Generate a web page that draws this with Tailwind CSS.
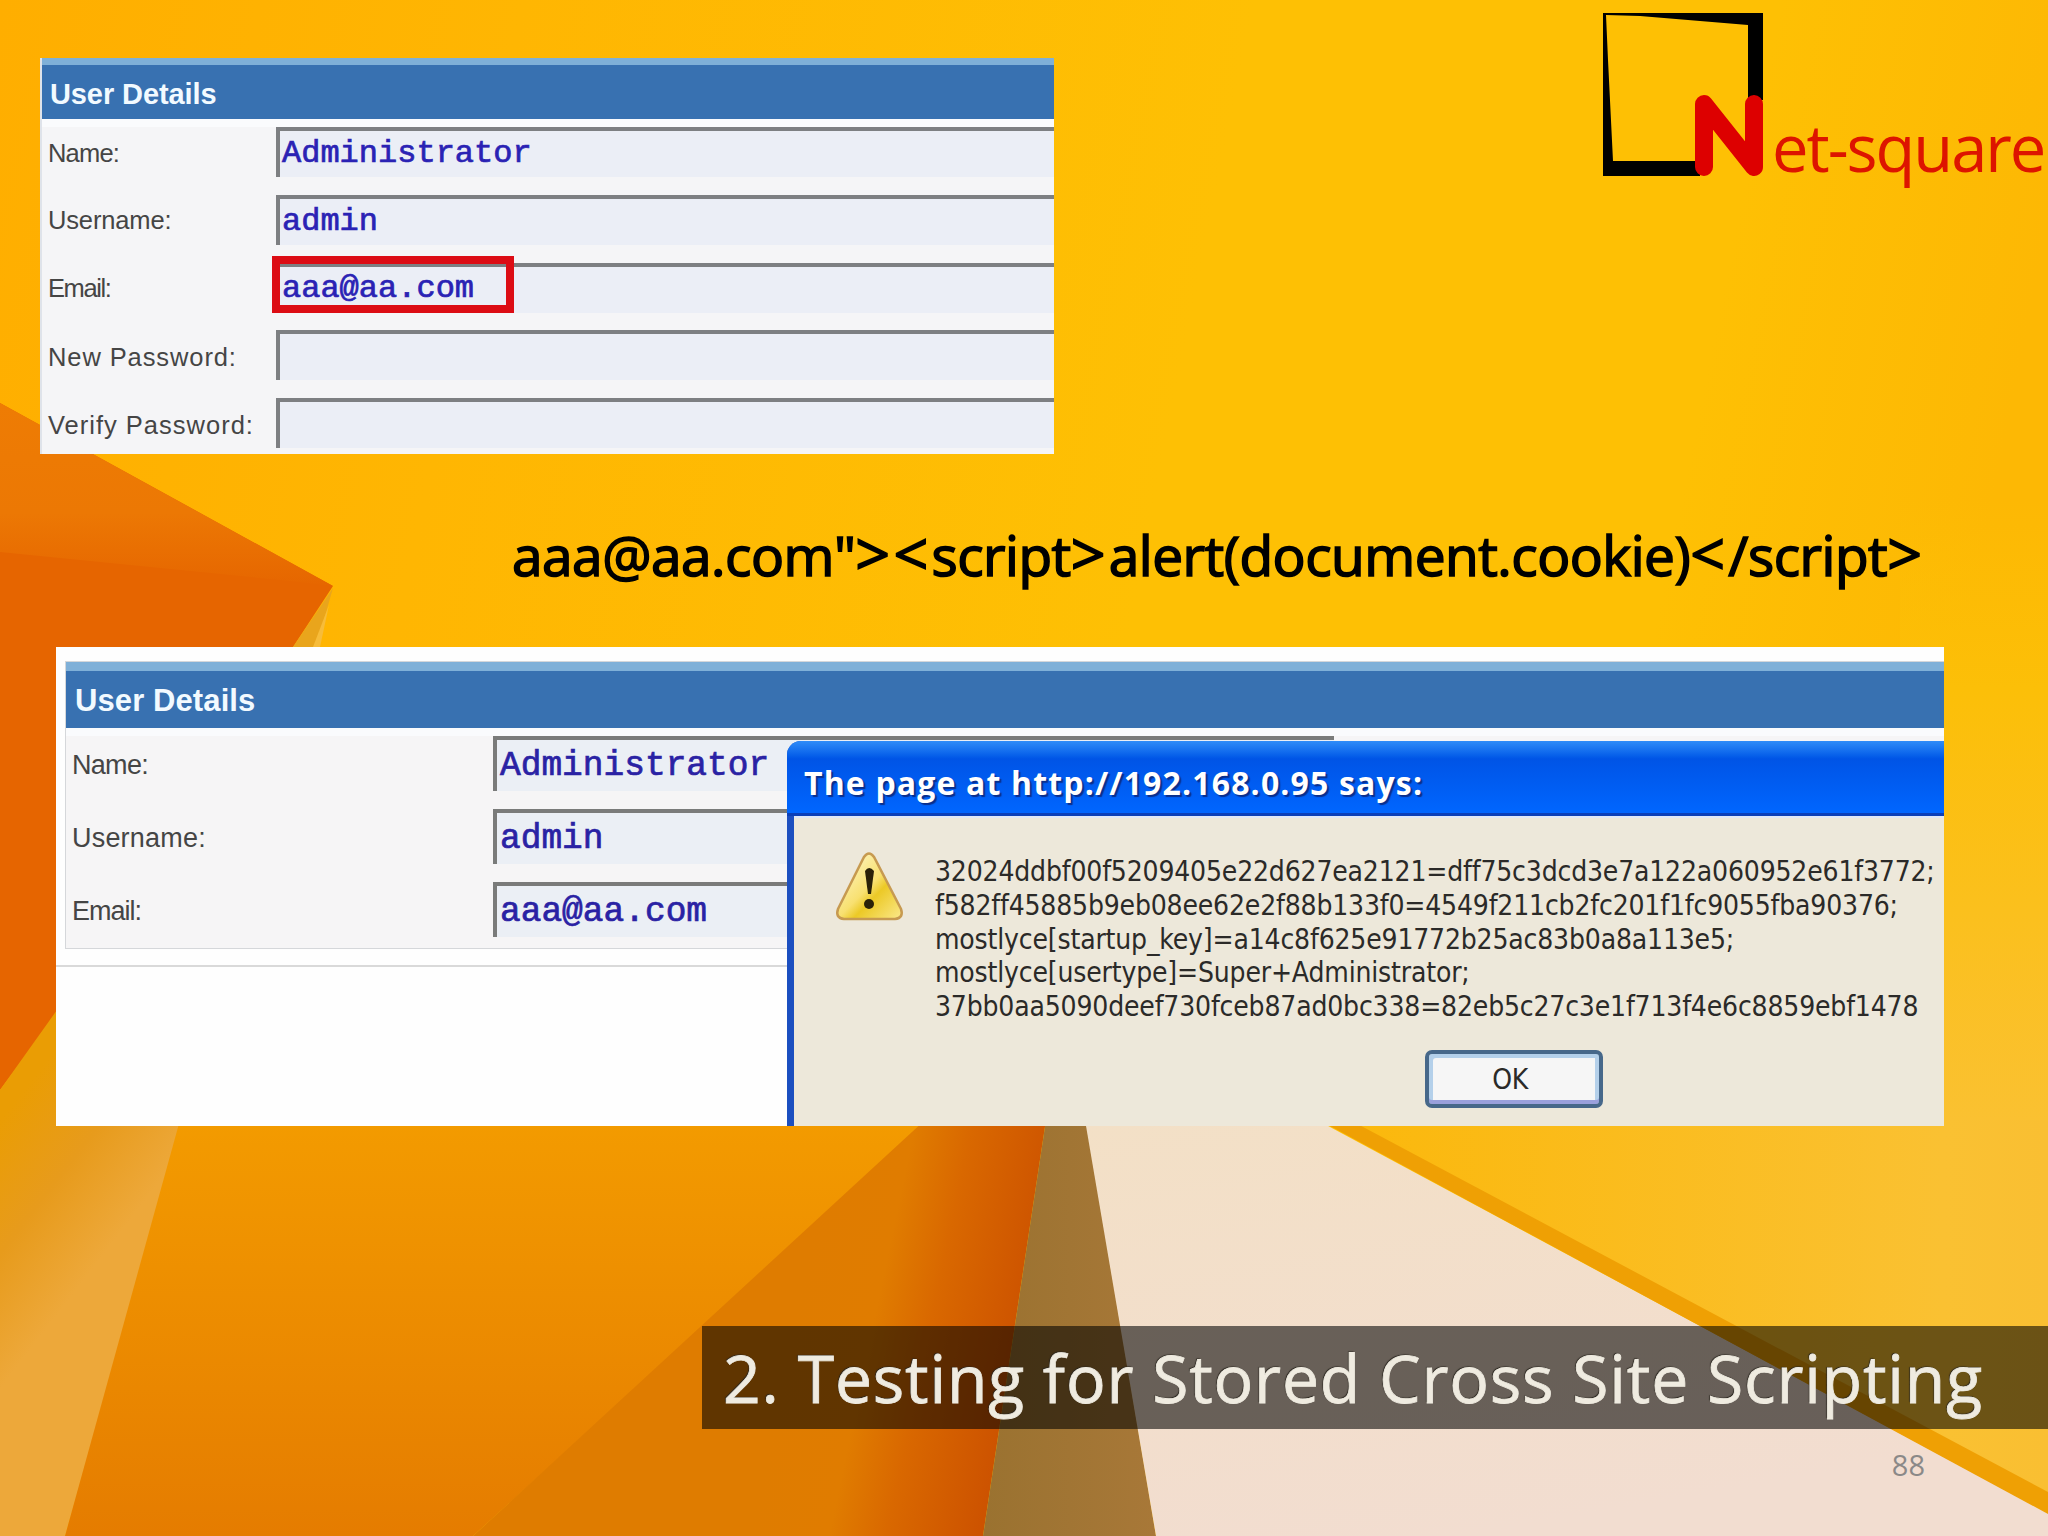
<!DOCTYPE html>
<html lang="en">
<head>
  <meta charset="UTF-8">
  <title>Testing for Stored Cross Site Scripting</title>
  <script src="https://cdn.jsdelivr.net/npm/@tailwindcss/browser@4"></script>
</head>
<body class="relative w-[2048px] h-[1536px] overflow-hidden bg-[#ffba00]">

  <!-- folded paper background -->
  <svg class="absolute inset-0" width="2048" height="1536" viewBox="0 0 2048 1536">
    <defs>
      <linearGradient id="sky" x1="0" y1="0" x2="1" y2="0.15">
        <stop offset="0" stop-color="#ffae00"/>
        <stop offset="0.25" stop-color="#ffb602"/>
        <stop offset="0.6" stop-color="#fec004"/>
        <stop offset="0.85" stop-color="#fec004"/>
        <stop offset="1" stop-color="#fdb804"/>
      </linearGradient>
      <linearGradient id="right" x1="0" y1="0" x2="1" y2="0">
        <stop offset="0" stop-color="#fbb80c"/>
        <stop offset="0.85" stop-color="#fac132"/>
        <stop offset="1" stop-color="#f9bf32"/>
      </linearGradient>
      <linearGradient id="rightEdge" x1="0" y1="0" x2="0" y2="1">
        <stop offset="0" stop-color="#fdc004" stop-opacity="0"/>
        <stop offset="0.3" stop-color="#fcbf08"/>
        <stop offset="1" stop-color="#fac132"/>
      </linearGradient>
      <linearGradient id="main" x1="0" y1="0" x2="0" y2="1">
        <stop offset="0" stop-color="#f39b00"/>
        <stop offset="1" stop-color="#e57c00"/>
      </linearGradient>
      <linearGradient id="fold" gradientUnits="userSpaceOnUse" x1="800" y1="1290" x2="1020" y2="1336">
        <stop offset="0" stop-color="#df7c00"/>
        <stop offset="0.35" stop-color="#e07c00"/>
        <stop offset="0.6" stop-color="#d96800"/>
        <stop offset="1" stop-color="#cd5300"/>
      </linearGradient>
      <linearGradient id="strip" gradientUnits="userSpaceOnUse" x1="0" y1="1120" x2="130" y2="1220">
        <stop offset="0" stop-color="#ea9d04"/>
        <stop offset="0.5" stop-color="#e79b1c"/>
        <stop offset="1" stop-color="#eda83a"/>
      </linearGradient>
      <linearGradient id="cream" x1="0" y1="0" x2="0.4" y2="1">
        <stop offset="0" stop-color="#f3e0c6"/>
        <stop offset="1" stop-color="#f2ddd0"/>
      </linearGradient>
      <linearGradient id="brown" x1="0" y1="0" x2="1" y2="0">
        <stop offset="0" stop-color="#9a7230"/>
        <stop offset="1" stop-color="#a87838"/>
      </linearGradient>
      <linearGradient id="upper" x1="0" y1="0" x2="0" y2="1">
        <stop offset="0" stop-color="#ee7c04"/>
        <stop offset="0.6" stop-color="#ec7804"/>
        <stop offset="1" stop-color="#e66600"/>
      </linearGradient>
    </defs>
    <rect width="2048" height="1536" fill="url(#sky)"/>
    <rect x="1900" y="500" width="148" height="630" fill="url(#rightEdge)"/>
    <polygon points="0,403 333,586 293,647 56,1015 0,1090" fill="#e66500"/>
    <polygon points="0,403 333,586 290,581 0,552" fill="url(#upper)"/>
    <polygon points="333,588 316,647 293,647" fill="#e9a51c"/>
    <polygon points="329,605 320,647 313,647" fill="#f7bc3a"/>
    <polygon points="0,1090 57,1010 57,1100 190,1100 65,1536 0,1536" fill="url(#strip)"/>
    <polygon points="180,1120 930,1120 473,1536 65,1536" fill="url(#main)"/>
    <polygon points="925,1120 1046,1120 983,1536 473,1536" fill="url(#fold)"/>
    <polygon points="1046,1120 1086,1120 1156,1536 983,1536" fill="url(#brown)"/>
    <polygon points="1085,1120 1317,1120 2048,1513 2048,1536 1156,1536" fill="url(#cream)"/>
    <polygon points="1319,1120 2048,1120 2048,1514" fill="#efa004"/>
    <polygon points="1350,1120 2048,1120 2048,1492" fill="url(#right)"/>
  </svg>

  <div class="relative flex flex-col h-full">

    <header class="flex justify-between h-[454px]">
      <!-- first form -->
      <section class="mt-[58px] ml-10 w-[1014px] h-[396px] overflow-hidden bg-[#f5f5f7] border-l-2 border-[#dfe3ea] font-['Liberation_Sans',sans-serif]">
        <div class="h-[61px] border-t-[7px] border-[#7fb0d8] bg-[#3871b1] pl-2 pt-[5px] flex items-center">
          <h2 class="text-[29px] font-bold text-[#f2faff] tracking-[-0.1px]">User Details</h2>
        </div>
        <div class="h-2 bg-[#fafbfd]"></div>
        <div class="flex flex-col gap-[17.8px] pl-[6px] text-[25.5px] text-[#454545]">
          <div class="flex h-[50px]">
            <label class="w-[228px] pt-[7px] tracking-[-0.8px]">Name:</label>
            <div class="flex-1 border-t-4 border-l-4 border-[#7d7f82] bg-[#ebeef6] pl-[2px] pt-[6px] font-['Liberation_Mono',monospace] text-[32px] leading-[34px] text-[#2a22b4] [-webkit-text-stroke:0.7px_#2a22b4]">Administrator</div>
          </div>
          <div class="flex h-[50px]">
            <label class="w-[228px] pt-[6px] tracking-[-0.15px]">Username:</label>
            <div class="flex-1 border-t-4 border-l-4 border-[#7d7f82] bg-[#ebeef6] pl-[2px] pt-[6px] font-['Liberation_Mono',monospace] text-[32px] leading-[34px] text-[#2a22b4] [-webkit-text-stroke:0.7px_#2a22b4]">admin</div>
          </div>
          <div class="relative flex h-[50px]">
            <label class="w-[228px] pt-[6px] tracking-[-1.4px]">Email:</label>
            <div class="flex-1 border-t-4 border-l-4 border-[#7d7f82] bg-[#ebeef6] pl-[2px] pt-[5px] font-['Liberation_Mono',monospace] text-[32px] leading-[34px] text-[#2a22b4] [-webkit-text-stroke:0.7px_#2a22b4]">aaa@aa.com</div>
            <!-- highlight -->
            <div class="absolute left-[224px] top-[-7px] w-[242px] h-[57px] border-8 border-[#dc0c14]"></div>
          </div>
          <div class="flex h-[50px]">
            <label class="w-[228px] pt-2 whitespace-nowrap tracking-[0.9px]">New Password:</label>
            <div class="flex-1 border-t-4 border-l-4 border-[#7d7f82] bg-[#ebeef6]"></div>
          </div>
          <div class="flex h-[50px]">
            <label class="w-[228px] pt-2 whitespace-nowrap tracking-[1px]">Verify Password:</label>
            <div class="flex-1 border-t-4 border-l-4 border-[#7d7f82] bg-[#ebeef6]"></div>
          </div>
        </div>
      </section>

      <!-- logo -->
      <svg width="448" height="200" viewBox="1600 0 448 200">
        <path d="M1603 13H1763V100H1748V25L1640 16L1606 15L1608 60L1613 161H1700V176H1603Z" fill="#000"/>
        <path d="M1704 167V104L1754 167V104" fill="none" stroke="#dd0000" stroke-width="18" stroke-linecap="round" stroke-linejoin="round"/>
        <text class="tracking-[-2px]" x="1772" y="172" font-family="'Open Sans', sans-serif" font-size="65" fill="#dd1400">et-square</text>
      </svg>
    </header>

    <p class="h-[193px] pl-[512px] pt-[61px] whitespace-nowrap font-['Open_Sans',sans-serif] text-[55px] leading-[80px] tracking-[-0.5px] text-black [-webkit-text-stroke:1.6px_#000]">aaa@aa.com"<span class="text-[61px] leading-[1px] tracking-[3.2px]">&gt;&lt;</span>script<span class="text-[61px] leading-[1px] tracking-[3.2px]">&gt;</span>alert(document.cookie)<span class="text-[61px] leading-[1px] tracking-[3.2px]">&lt;</span>/script<span class="text-[61px] leading-[1px]">&gt;</span></p>

    <!-- second form with the alert over it -->
    <section class="relative ml-14 w-[1888px] h-[479px] overflow-hidden bg-[#fefefe] pt-[14px] font-['Liberation_Sans',sans-serif]">
      <div class="ml-[9px] h-[288px] border border-r-0 border-[#d5d7da] bg-[#f6f5f6]">
        <div class="h-[66px] border-t-[9px] border-[#7fb0d8] bg-[#3871b1] pl-[9px] pt-[4px] flex items-center">
          <h2 class="text-[31px] font-bold text-[#f2faff] tracking-[0.1px]">User Details</h2>
        </div>
        <div class="h-2 bg-[#fafbfd]"></div>
        <div class="flex flex-col gap-[18px] pl-[6px] text-[27px] text-[#454545]">
          <div class="flex h-[55px]">
            <label class="w-[421px] pt-[9px] tracking-[-0.7px]">Name:</label>
            <div class="w-[841px] border-t-4 border-l-4 border-[#7a7b7a] bg-[#ebeff5] pl-[3px] pt-[8px] font-['Liberation_Mono',monospace] text-[34.5px] leading-[36px] text-[#2a22a4] [-webkit-text-stroke:0.7px_#2a22a4]">Administrator</div>
          </div>
          <div class="flex h-[55px]">
            <label class="w-[421px] pt-[9px] tracking-[0.2px]">Username:</label>
            <div class="w-[841px] border-t-4 border-l-4 border-[#7a7b7a] bg-[#ebeff5] pl-[3px] pt-[8px] font-['Liberation_Mono',monospace] text-[34.5px] leading-[36px] text-[#2a22a4] [-webkit-text-stroke:0.7px_#2a22a4]">admin</div>
          </div>
          <div class="flex h-[55px]">
            <label class="w-[421px] pt-[9px] tracking-[-1px]">Email:</label>
            <div class="w-[841px] border-t-4 border-l-4 border-[#7a7b7a] bg-[#ebeff5] pl-[3px] pt-[8px] font-['Liberation_Mono',monospace] text-[34.5px] leading-[36px] text-[#2a22a4] [-webkit-text-stroke:0.7px_#2a22a4]">aaa@aa.com</div>
          </div>
        </div>
      </div>
      <div class="mt-4 h-[2px] bg-[#d9d9d9]"></div>

      <!-- alert -->
      <div class="absolute left-[731px] top-[94px] right-0 bottom-0 flex flex-col rounded-tl-[14px] bg-[#1c4fc0]">
        <div class="h-[75px] rounded-tl-[14px] bg-linear-to-b from-[#2f8cf8] via-[#0054e6] via-25% to-[#0066ff] border-b-3 border-[#0a3fb8] pl-[17px]">
          <h3 class="whitespace-nowrap font-['Open_Sans',sans-serif] text-[32px] leading-[83px] font-bold tracking-[1.15px] text-white [text-shadow:2px_2px_1px_#0a2f8c]">The page at http://192.168.0.95 says:</h3>
        </div>
        <div class="relative ml-[7px] flex-1 bg-[#ede8da] border-t-2 border-[#dfe8f8]">
          <div class="flex pt-[33px] pl-[41px]">
            <svg width="70" height="70" viewBox="0 0 70 70">
              <defs>
                <linearGradient id="warn" x1="0" y1="0" x2="1" y2="1">
                  <stop offset="0" stop-color="#fffbd8"/>
                  <stop offset="0.5" stop-color="#f8e070"/>
                  <stop offset="0.62" stop-color="#ecc926"/>
                  <stop offset="1" stop-color="#fbe98c"/>
                </linearGradient>
              </defs>
              <path d="M29 6Q34 -1 39 6L66 58Q69 67 60 68H9Q0 67 3 58Z" fill="url(#warn)" stroke="#c79a50" stroke-width="2.5"/>
              <path d="M30 20Q34 14 39 20L36 43H33Z" fill="#2a2108"/>
              <circle cx="34" cy="53" r="5" fill="#2a2108"/>
            </svg>
            <div class="ml-[30px] mt-1 whitespace-nowrap font-['DejaVu_Sans_Condensed','DejaVu_Sans',sans-serif] text-[28px] leading-[33.8px] tracking-[-0.17px] text-[#2b2a28]">
              <p>32024ddbf00f5209405e22d627ea2121=dff75c3dcd3e7a122a060952e61f3772;</p>
              <p>f582ff45885b9eb08ee62e2f88b133f0=4549f211cb2fc201f1fc9055fba90376;</p>
              <p>mostlyce[startup_key]=a14c8f625e91772b25ac83b0a8a113e5;</p>
              <p>mostlyce[usertype]=Super+Administrator;</p>
              <p>37bb0aa5090deef730fceb87ad0bc338=82eb5c27c3e1f713f4e6c8859ebf1478</p>
            </div>
          </div>
          <button class="absolute left-[631px] top-[232px] w-[178px] h-[58px] rounded-[7px] border-4 border-[#47688a] bg-[#f6f6f6] shadow-[inset_0_-4px_0_#9aa0dc,inset_4px_4px_0_#b4d0ea,inset_-4px_0_0_#b4d0ea] pr-2 pt-[2px] font-['DejaVu_Sans_Condensed','DejaVu_Sans',sans-serif] text-[28px] tracking-[-0.5px] text-[#2b2a28]">OK</button>
        </div>
      </div>
    </section>

    <!-- slide title -->
    <div class="mt-[200px] ml-[702px] h-[103px] bg-black/57 pl-[21px]">
      <h1 class="whitespace-nowrap font-['Open_Sans',sans-serif] text-[66px] leading-[103px] tracking-[0.83px] text-[#efebe0] [-webkit-text-stroke:0.8px_#efebe0] [text-shadow:-1px_-1px_1px_#2a261f]">2. Testing for Stored Cross Site Scripting</h1>
    </div>
    <p class="mt-[16px] pr-[123px] text-right font-['Open_Sans',sans-serif] text-[29px] leading-[40px] text-[#8b8988]">88</p>
  </div>

</body>
</html>
